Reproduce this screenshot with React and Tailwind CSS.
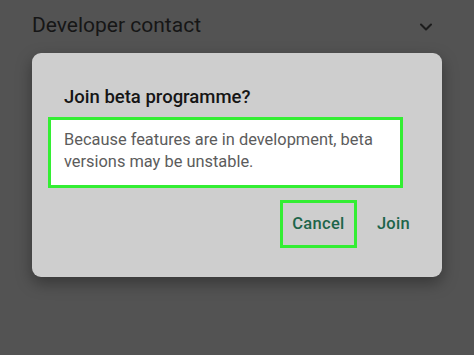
import { ChevronDown } from "lucide-react";

export default function App() {
  return (
    <div className="w-[474px] h-[355px] overflow-hidden bg-[#535353] font-['Roboto',sans-serif]">
      <div className="flex items-center justify-between pl-[32px] pr-[38px] pt-[11px] h-[39px]">
        <span className="text-[21px] leading-[28px] text-[#161616]">Developer contact</span>
        <ChevronDown size={20} strokeWidth={2.4} className="text-[#1c1c1c] mt-[4px]" />
      </div>

      <div className="ml-[32px] mt-[14px] w-[410px] h-[224px] rounded-[9px] bg-[#cecece] shadow-[0_6px_16px_rgba(0,0,0,0.35)] flex flex-col">
        <h2 className="pl-[32px] pt-[32px] text-[18.5px] leading-[24px] font-medium text-[#151515]">
          Join beta programme?
        </h2>
        <div className="ml-[16px] mt-[8px] w-[355px] h-[71px] border-[3px] border-[#33ee33] bg-white pl-[13px] pt-[9px]">
          <p className="text-[16.4px] leading-[22px] text-[#5c5c5c]">
            Because features are in development, beta versions may be unstable.
          </p>
        </div>
        <div className="flex items-center justify-end pr-[32px] mt-[12px] gap-[20px]">
          <div className="w-[77px] h-[48px] border-[3px] border-[#33ee33] flex items-center justify-center">
            <span className="text-[16.5px] font-medium tracking-[0.3px] text-[#1d654a]">Cancel</span>
          </div>
          <span className="text-[16.5px] font-medium tracking-[0.3px] text-[#1d654a]">Join</span>
        </div>
      </div>
    </div>
  );
}
